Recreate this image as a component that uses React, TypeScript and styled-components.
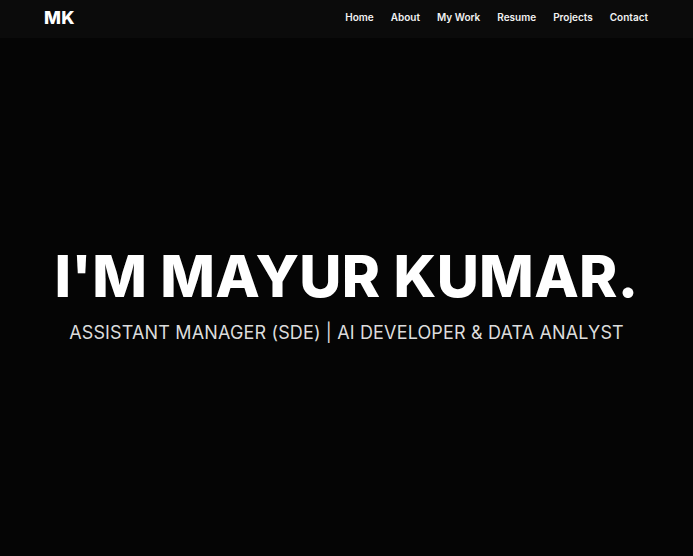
import React from "react";
import styled, { createGlobalStyle } from "styled-components";

const Global = createGlobalStyle`
  html, body { margin: 0; padding: 0; background: #050505; }
  body { font-family: Inter, "Noto Sans", sans-serif; color: #fff; }
  * { box-sizing: border-box; }
`;

const Page = styled.div`
  min-height: 556px;
  display: flex;
  flex-direction: column;
  background: #050505;
`;

const NavBar = styled.header`
  height: 38px;
  background: #0b0b0b;
  display: flex;
  align-items: center;
  justify-content: space-between;
  padding: 0 45px 4px 44px;
`;

const Logo = styled.div`
  font-size: 18px;
  font-weight: 800;
  color: #fff;
  letter-spacing: 0.2px;
`;

const Links = styled.nav`
  display: flex;
  gap: 17px;
`;

const NavLink = styled.a`
  font-size: 10px;
  font-weight: 600;
  color: #f2f2f2;
  text-decoration: none;
`;

const Hero = styled.main`
  flex: 1;
  display: flex;
  flex-direction: column;
  align-items: center;
  justify-content: center;
  padding-bottom: 6px;
`;

const Title = styled.h1`
  margin: 0;
  font-size: 58px;
  font-weight: 800;
  line-height: 1.1;
  color: #fff;
  letter-spacing: 0.3px;
`;

const Subtitle = styled.p`
  margin: 14px 0 0;
  font-size: 18px;
  font-weight: 400;
  color: #dcdcdc;
  letter-spacing: 0.15px;
`;

const links = ["Home", "About", "My Work", "Resume", "Projects", "Contact"];

export default function App() {
  return (
    <>
      <Global />
      <Page>
        <NavBar>
          <Logo>MK</Logo>
          <Links>
            {links.map((l) => (
              <NavLink key={l} href="#">
                {l}
              </NavLink>
            ))}
          </Links>
        </NavBar>
        <Hero>
          <Title>I'M MAYUR KUMAR.</Title>
          <Subtitle>ASSISTANT MANAGER (SDE) | AI DEVELOPER &amp; DATA ANALYST</Subtitle>
        </Hero>
      </Page>
    </>
  );
}
